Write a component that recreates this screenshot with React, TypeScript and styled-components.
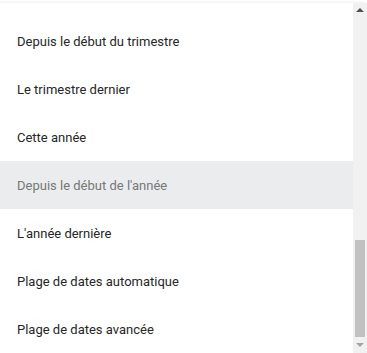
import React from "react";
import styled, { createGlobalStyle } from "styled-components";

const Global = createGlobalStyle`
  html, body { margin: 0; padding: 0; background: #ffffff; }
  body { width: 367px; height: 353px; overflow: hidden; }
`;

const Panel = styled.div`
  width: 367px;
  height: 353px;
  display: flex;
  flex-direction: column;
  background: #fff;
`;

const TopEdge = styled.div`
  height: 3px;
  flex: none;
  background: linear-gradient(#ffffff 0, #ffffff 1px, #f2f2f2 2px, #fafafa 3px);
  margin-right: 2px;
`;

const Body = styled.div`
  flex: 1;
  display: flex;
  min-height: 0;
`;

const List = styled.ul`
  list-style: none;
  margin: 0;
  padding: 14px 0 0 0;
  flex: 1;
  overflow: hidden;
`;

const Item = styled.li<{ $active?: boolean }>`
  height: 48px;
  display: flex;
  align-items: center;
  padding-left: 17px;
  font-family: Roboto, "Noto Sans", sans-serif;
  font-size: 13px;
  color: ${(p) => (p.$active ? "#777777" : "#262626")};
  background: ${(p) => (p.$active ? "#ebecee" : "transparent")};
`;

const Scrollbar = styled.div`
  width: 14px;
  flex: none;
  background: #f1f1f1;
  display: flex;
  flex-direction: column;
`;

const ArrowButton = styled.div`
  height: 15px;
  flex: none;
  display: flex;
  align-items: center;
  justify-content: center;
`;

const Track = styled.div`
  flex: 1;
  display: flex;
  flex-direction: column;
  justify-content: flex-end;
  padding: 0 2px 1px 2px;
`;

const Thumb = styled.div`
  height: 97px;
  background: #c1c1c1;
`;

const items = [
  "Depuis le début du trimestre",
  "Le trimestre dernier",
  "Cette année",
  "Depuis le début de l'année",
  "L'année dernière",
  "Plage de dates automatique",
  "Plage de dates avancée",
];

export default function App() {
  return (
    <>
      <Global />
      <Panel>
        <TopEdge />
        <Body>
          <List>
            {items.map((t, i) => (
              <Item key={t} $active={i === 3}>
                {t}
              </Item>
            ))}
          </List>
          <Scrollbar>
            <ArrowButton>
              <svg width="8" height="5" viewBox="0 0 8 5">
                <polygon points="0,4 8,4 4,0" fill="#505050" />
              </svg>
            </ArrowButton>
            <Track>
              <Thumb />
            </Track>
            <ArrowButton>
              <svg width="8" height="5" viewBox="0 0 8 5">
                <polygon points="0,0 8,0 4,4" fill="#a3a3a3" />
              </svg>
            </ArrowButton>
          </Scrollbar>
        </Body>
      </Panel>
    </>
  );
}
